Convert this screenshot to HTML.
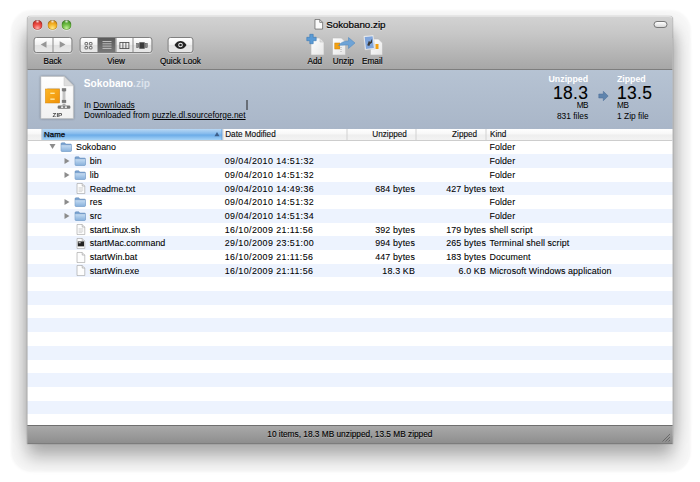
<!DOCTYPE html>
<html>
<head>
<meta charset="utf-8">
<title>Sokobano.zip</title>
<style>
html,body{margin:0;padding:0;background:#fff;}
body{width:700px;height:482px;overflow:hidden;position:relative;font-family:"Liberation Sans",sans-serif;color:#000;}
.abs{position:absolute;}
#win{position:absolute;left:27px;top:16px;width:644.8px;height:428.2px;transform:translateX(.5px);border-radius:4px 4px 0 0;
  box-shadow:0 13px 17px rgba(0,0,0,0.29),0 0 1px rgba(0,0,0,0.5);background:#fff;}
#tb{position:absolute;left:0;top:0;width:100%;height:52.7px;border-radius:4px 4px 0 0;
  background:linear-gradient(#d3d3d3 0,#c7c7c7 33%,#a7a7a7 100%);border-bottom:1px solid #7e7e7e;box-shadow:inset 0 1px 0 #e2e2e2;}
.tl{position:absolute;top:3px;width:10px;height:10px;border-radius:50%;box-shadow:inset 0 0 0 .6px rgba(0,0,0,.3),0 1px 0 rgba(255,255,255,.4);}
.lbl{position:absolute;top:40.3px;font-size:8.2px;line-height:10px;white-space:nowrap;color:#000;-webkit-text-stroke:.15px #000;text-shadow:0 1px 0 rgba(255,255,255,.35);transform:translateX(-50%);}
.btn{position:absolute;top:20.3px;height:16px;border:1px solid #808080;border-radius:3px;
  background:linear-gradient(#ffffff,#f0f0f0 48%,#e2e2e2 52%,#e8e8e8);box-shadow:0 1px 0 rgba(255,255,255,.4);box-sizing:border-box;}
#info{position:absolute;left:0;top:53.7px;width:100%;height:59.7px;background:linear-gradient(#b6c3d3,#a9b6c8);}
#hdr{position:absolute;left:0;top:113px;width:100%;height:12px;background:linear-gradient(#ffffff,#f7f7f7 48%,#eeeeee 52%,#f3f3f3);border-bottom:1px solid #cdcdcd;box-sizing:border-box;z-index:2;}
.hc{position:absolute;top:0;height:11px;font-size:8.2px;line-height:11.6px;-webkit-text-stroke:.12px #000;white-space:nowrap;color:#111;}
.hd{position:absolute;top:0;width:1px;height:11px;background:#d2d2d2;}
#rows{position:absolute;left:0;top:124px;width:100%;height:285px;overflow:hidden;
  background:repeating-linear-gradient(#fff .65px,#fff 14.33px,#edf3fe 14.33px,#edf3fe 28.01px);}
.r{position:absolute;left:0;width:100%;height:13.68px;font-size:8.9px;line-height:14.2px;white-space:nowrap;-webkit-text-stroke:.08px #000;}
.r span{position:absolute;top:0;}
.d{left:197.2px;letter-spacing:.42px;}
.u{right:257.3px;text-align:right;letter-spacing:.15px;}
.z{right:186.3px;text-align:right;letter-spacing:.15px;}
.k{left:462px;letter-spacing:.09px;}
#sb{position:absolute;left:0;top:409px;width:100%;height:19.2px;background:linear-gradient(#a9a9a9,#8e8e8e);border-top:1px solid #6f6f6f;border-bottom:1px solid #7c7c7c;box-sizing:border-box;
  font-size:8.3px;line-height:17.4px;text-align:center;color:#000;-webkit-text-stroke:.12px #000;text-shadow:0 1px 0 rgba(255,255,255,.3);}
svg{position:absolute;overflow:visible;}
.halo{position:absolute;left:0;top:0;width:100%;height:100%;border-radius:7px;box-shadow:.7px 11px 2px 17px rgba(0,0,0,.03);z-index:-1;}
.sh{position:absolute;left:0;top:22px;width:100%;height:398px;box-shadow:0 0 18px rgba(0,0,0,.22);z-index:-1;}
</style>
</head>
<body>
<div id="win">
  <svg width="0" height="0" style="left:0;top:0"><defs><linearGradient id="fg" x1="0" y1="0" x2="0" y2="1"><stop offset="0" stop-color="#c2daf2"/><stop offset="1" stop-color="#8ab2dc"/></linearGradient></defs></svg>
  <div class="sh"></div>
  <div class="halo"></div>
  <div id="tb"><div class="abs" style="left:0;top:1px;width:100%;height:0">
    <div class="tl" style="left:5.4px;background:radial-gradient(circle at 50% 12%,rgba(255,255,255,.85) 0,rgba(255,255,255,0) 22%),radial-gradient(circle at 50% 82%,#ffb0aa 0,#ee5048 38%,#d93a32 62%,#8e261f 100%);"></div>
    <div class="tl" style="left:19.8px;background:radial-gradient(circle at 50% 12%,rgba(255,255,255,.85) 0,rgba(255,255,255,0) 22%),radial-gradient(circle at 50% 82%,#ffe88a 0,#f6b92c 38%,#e89c18 62%,#94600c 100%);"></div>
    <div class="tl" style="left:34.1px;background:radial-gradient(circle at 50% 12%,rgba(255,255,255,.85) 0,rgba(255,255,255,0) 22%),radial-gradient(circle at 50% 82%,#c4f09a 0,#74c048 38%,#56a632 62%,#2f701a 100%);"></div>
    <!-- title -->
    <svg style="left:286.6px;top:2px" width="8.6" height="10.6" viewBox="0 0 9 11"><path d="M.5.5h5l3 3v7h-8z" fill="#fafafa" stroke="#666" stroke-width=".8"/><path d="M5.5.5v3h3" fill="none" stroke="#666" stroke-width=".8"/></svg>
    <div class="abs" style="left:298.7px;top:1.6px;font-size:9.8px;line-height:12px;white-space:nowrap;color:#000;-webkit-text-stroke:.2px #000;text-shadow:0 1px 0 rgba(255,255,255,.4);">Sokobano.zip</div>
    <!-- pill -->
    <div class="abs" style="left:626px;top:4px;width:14px;height:6.5px;border:1px solid #777;border-radius:4px;background:linear-gradient(#fff,#d8d8d8);box-sizing:border-box"></div>
    <!-- back/forward -->
    <div class="btn" style="left:6px;width:38.6px;"></div>
    <div class="abs" style="left:25px;top:21.3px;width:1px;height:14px;background:#8a8a8a"></div>
    <svg style="left:13.3px;top:24.4px" width="6.2" height="7" viewBox="0 0 6 7" preserveAspectRatio="none"><path d="M5.8 0.2v6.6L0.2 3.5z" fill="#969696"/></svg>
    <svg style="left:32px;top:24.4px" width="6.2" height="7" viewBox="0 0 6 7" preserveAspectRatio="none"><path d="M0.2 0.2v6.6L5.8 3.5z" fill="#969696"/></svg>
    <div class="lbl" style="left:25.1px">Back</div>
    <!-- view segmented -->
    <div class="btn" style="left:51.6px;width:73px;"></div>
    <div class="abs" style="left:70.2px;top:21.3px;width:17.5px;height:14px;background:linear-gradient(#5a5a5a,#787878);"></div>
    <div class="abs" style="left:87.7px;top:21.3px;width:1px;height:14px;background:#8a8a8a"></div>
    <div class="abs" style="left:105.2px;top:21.3px;width:1px;height:14px;background:#8a8a8a"></div>
    <svg style="left:57.2px;top:24.6px" width="8" height="7.4" viewBox="0 0 8 7.4"><g fill="#f4f4f4" stroke="#4a4a4a" stroke-width=".8"><rect x=".5" y=".5" width="2.6" height="2.4" rx=".4"/><rect x="4.9" y=".5" width="2.6" height="2.4" rx=".4"/><rect x=".5" y="4.5" width="2.6" height="2.4" rx=".4"/><rect x="4.9" y="4.5" width="2.6" height="2.4" rx=".4"/></g></svg>
    <svg style="left:74.6px;top:24px" width="9" height="8" viewBox="0 0 9 8"><g stroke="#c8c8c8" stroke-width=".9"><path d="M0 .5h9M0 2.8h9M0 5.1h9M0 7.4h9"/></g></svg>
    <svg style="left:92px;top:24.5px" width="10" height="7" viewBox="0 0 10 7"><g fill="none" stroke="#444" stroke-width=".8"><rect x=".4" y=".4" width="9" height="6.2"/><path d="M3.4.4v6.2M6.4.4v6.2"/></g></svg>
    <svg style="left:109.2px;top:24.6px" width="11" height="7" viewBox="0 0 11 7"><rect x="2.800" y=".3" width="5.400" height="6.400" fill="#3a3a3a"/><rect x=".2" y="1.300" width="2" height="4.400" fill="#8a8a8a" stroke="#555" stroke-width=".5"/><rect x="8.800" y="1.300" width="2" height="4.400" fill="#8a8a8a" stroke="#555" stroke-width=".5"/></svg>
    <div class="lbl" style="left:88.6px">View</div>
    <!-- quick look -->
    <div class="btn" style="left:140.4px;width:25.5px;"></div>
    <svg style="left:147.2px;top:24.2px" width="12" height="8" viewBox="0 0 12 8"><path d="M0 4C2 .8 4 0 6 0s4 .8 6 4c-2 3.200-4 4-6 4S2 7.200 0 4z" fill="#222"/><circle cx="6" cy="4" r="2.300" fill="#f2f2f2"/><circle cx="6" cy="4" r="1.300" fill="#222"/></svg>
    <div class="lbl" style="left:152.9px">Quick Look</div>
    <!-- Add -->
    <svg style="left:278.5px;top:16px" width="20" height="23" viewBox="0 0 20 23"><defs><linearGradient id="pp" x1="0" y1="0" x2="1" y2="1"><stop offset="0" stop-color="#ffffff"/><stop offset="1" stop-color="#e6e6e6"/></linearGradient></defs><path d="M4.500 5h9l4 4v13h-13z" fill="url(#pp)" stroke="#b8b8b8" stroke-width=".6"/><path d="M13.500 5v4h4z" fill="#e2e2e2" stroke="#b8b8b8" stroke-width=".5"/><path d="M3.300 1.300h3.400v3h3v3.400h-3v3H3.300v-3h-3V4.300h3z" fill="#5b9bd5" stroke="#3b78b4" stroke-width=".6"/></svg>
    <div class="lbl" style="left:287.4px">Add</div>
    <!-- Unzip -->
    <svg style="left:304px;top:17px" width="24" height="22" viewBox="0 0 24 22"><path d="M1 4h9l4 4v13H1z" fill="url(#pp)" stroke="#b8b8b8" stroke-width=".6"/><rect x="3.300" y="9" width="5" height="6" fill="#f2a012" stroke="#c97d06" stroke-width=".5"/><path d="M9.500 13v5" stroke="#aaa" stroke-width="1" stroke-dasharray="1 1"/><path d="M7 11.500c3-3.500 6-4.500 10-4.500V3.500l6.500 5.500-6.500 5.500V11c-4 0-7 .2-10 .5z" fill="#6ea3d6" stroke="#4a84bd" stroke-width=".5"/></svg>
    <div class="lbl" style="left:315.8px">Unzip</div>
    <!-- Email -->
    <svg style="left:336px;top:17px" width="22" height="22" viewBox="0 0 22 22"><path d="M7 5h8l4 4v12H7z" fill="url(#pp)" stroke="#b8b8b8" stroke-width=".6"/><rect x="12" y="10" width="3" height="5" fill="#f2a012"/><g transform="rotate(-6 6 9)"><rect x=".8" y="1.500" width="10" height="14" fill="#f4f4f4" stroke="#c9c9c9" stroke-width=".5"/><rect x="1.800" y="2.500" width="8" height="12" fill="#7fa5dc"/><path d="M3.500 11l2-4 1.500 1 2-3-.5 4-2 1-1 2z" fill="#3a3a3a"/></g></svg>
    <div class="lbl" style="left:344.8px">Email</div>
  </div></div>

  <div id="info">
    <!-- zip icon -->
    <svg style="left:12.5px;top:6.1px;filter:drop-shadow(0 .6px .8px rgba(0,0,0,.35))" width="33.3" height="43" viewBox="0 0 34 44" preserveAspectRatio="none"><defs><linearGradient id="pg" x1="0" y1="0" x2="0" y2="1"><stop offset="0" stop-color="#ffffff"/><stop offset="1" stop-color="#f1f1f1"/></linearGradient><linearGradient id="og" x1="0" y1="0" x2="1" y2="1"><stop offset="0" stop-color="#fdb827"/><stop offset="1" stop-color="#ee8f06"/></linearGradient></defs>
      <path d="M.4.400H24l9.600 9.600v33.600H.4z" fill="url(#pg)" stroke="#c4c4c4" stroke-width=".6"/>
      <path d="M24 .4v9.600h9.600z" fill="#dedede" stroke="#c4c4c4" stroke-width=".5"/>
      <rect x="7.500" y="12.500" width="12" height="15" fill="#e9e9e9" stroke="#bdbdbd" stroke-width=".5"/>
      <rect x="5" y="13.300" width="14.500" height="14.300" fill="url(#og)" stroke="#d88605" stroke-width=".5"/>
      <rect x="10" y="17" width="4.500" height="1.400" fill="#ffe9a8"/><rect x="10" y="23" width="4.500" height="1.400" fill="#ffe9a8"/>
      <path d="M24 13v20" stroke="#8f8f8f" stroke-width="3" stroke-dasharray="1 1"/>
      <rect x="21.800" y="12.500" width="4.400" height="3" fill="#7a7a7a"/><rect x="21.800" y="24.500" width="4.400" height="3" fill="#7a7a7a"/>
      <rect x="17.500" y="30.200" width="13" height="3.300" rx="1.200" fill="#767676"/><rect x="21" y="30.900" width="2.200" height="1.900" rx=".6" fill="#e8e8e8"/><rect x="24.800" y="30.900" width="2.200" height="1.900" rx=".6" fill="#e8e8e8"/>
      <text x="17.300" y="41.500" font-size="6.400" font-weight="bold" text-anchor="middle" fill="#4a4a4a" font-family="Liberation Sans, sans-serif">ZIP</text>
    </svg>
    <div class="abs" style="left:56.3px;top:8.3px;font-size:10.2px;line-height:12px;font-weight:bold;color:#fff;white-space:nowrap;">Sokobano<span style="color:#dbe2ec">.zip</span></div>
    <div class="abs" style="left:56.500px;top:31.400px;font-size:8.400px;line-height:9.500px;white-space:nowrap;color:#000">In <u>Downloads</u><br>Downloaded from <u>puzzle.dl.sourceforge.net</u></div>
    <div class="abs" style="left:219px;top:30.3px;width:1px;height:10px;background:#222"></div>
    <!-- right stats -->
    <div class="abs" style="right:84.2px;top:4.5px;font-size:8.800px;line-height:10px;font-weight:bold;color:#fff;white-space:nowrap;">Unzipped</div>
    <div class="abs" style="right:84px;top:13px;font-size:17.500px;line-height:20px;white-space:nowrap;letter-spacing:.3px;-webkit-text-stroke:.1px #000">18.3</div>
    <div class="abs" style="right:84.2px;top:30.9px;font-size:8.2px;line-height:10px;white-space:nowrap;letter-spacing:-.45px">MB</div>
    <div class="abs" style="right:84.2px;top:41.6px;font-size:8.400px;line-height:10px;white-space:nowrap">831 files</div>
    <svg style="left:570.8px;top:21px" width="10" height="10" viewBox="0 0 10 10"><path d="M.3 3h4.500V.3L9.700 5 4.800 9.700V7H.3z" fill="#5f84ad" stroke="#486b94" stroke-width=".5"/></svg>
    <div class="abs" style="left:589.4px;top:4.5px;font-size:8.800px;line-height:10px;font-weight:bold;color:#fff;white-space:nowrap;">Zipped</div>
    <div class="abs" style="left:589.5px;top:13px;font-size:17.500px;line-height:20px;white-space:nowrap;letter-spacing:.3px;-webkit-text-stroke:.1px #000">13.5</div>
    <div class="abs" style="left:589.6px;top:30.9px;font-size:8.2px;line-height:10px;white-space:nowrap;letter-spacing:-.45px">MB</div>
    <div class="abs" style="left:589.6px;top:41.6px;font-size:8.400px;line-height:10px;white-space:nowrap">1 Zip file</div>
  </div>

  <div id="hdr">
    <div class="abs" style="left:14px;top:0;width:181px;height:11px;background:linear-gradient(#b9d8f4,#82b9ec 46%,#6aabe7 54%,#a6d4f8);box-shadow:inset -1px 0 0 #6a9fd8,inset 1px 0 0 #8fbcea"></div>
    <div class="hc" style="left:16.6px;font-size:7.9px;-webkit-text-stroke:.25px #000">Name</div>
    <svg style="left:187px;top:3px" width="5" height="4.3" viewBox="0 0 5 4" preserveAspectRatio="none"><path d="M2.500 0L5 4H0z" fill="#3c5f8a"/></svg>
    <div class="hd" style="left:13.500px"></div>
    <div class="hd" style="left:195px"></div>
    <div class="hc" style="left:197.700px">Date Modified</div>
    <div class="hd" style="left:318.800px"></div>
    <div class="hc" style="right:265.400px">Unzipped</div>
    <div class="hd" style="left:388.200px"></div>
    <div class="hc" style="right:195.200px">Zipped</div>
    <div class="hd" style="left:458.300px"></div>
    <div class="hc" style="left:462.500px">Kind</div>
  </div>

  <div id="rows">
    <div class="r" style="top:0.2px"><svg style="left:21.7px;top:4.300px" width="6" height="5" viewBox="0 0 6 5"><path d="M0 0h6L3 5z" fill="#8c8c8c"/></svg><svg style="left:32.9px;top:1.9px" width="11.5" height="10" viewBox="0 0 23 19" preserveAspectRatio="none"><path d="M1 3.500Q1 1.500 3 1.500h5.500l2 2.500H20q2 0 2 2V16q0 2-2 2H3q-2 0-2-2z" fill="#7ba3cf" stroke="#5f8aba" stroke-width="1"/><path d="M1.500 6.500h20V16q0 1.500-1.500 1.500H3Q1.500 17.500 1.500 16z" fill="url(#fg)"/><path d="M1.500 6.500h20" stroke="#d3e4f4" stroke-width="1"/></svg><span style="left:48.5px">Sokobano</span><span class="k">Folder</span></div>
    <div class="r" style="top:14.33px"><svg style="left:37.2px;top:3.800px" width="5" height="6" viewBox="0 0 5 6"><path d="M0 0L5 3 0 6z" fill="#8c8c8c"/></svg><svg style="left:47.2px;top:1.9px" width="11.5" height="10" viewBox="0 0 23 19" preserveAspectRatio="none"><path d="M1 3.500Q1 1.500 3 1.500h5.500l2 2.500H20q2 0 2 2V16q0 2-2 2H3q-2 0-2-2z" fill="#7ba3cf" stroke="#5f8aba" stroke-width="1"/><path d="M1.500 6.500h20V16q0 1.500-1.500 1.500H3Q1.500 17.500 1.500 16z" fill="url(#fg)"/><path d="M1.500 6.500h20" stroke="#d3e4f4" stroke-width="1"/></svg><span style="left:62.3px">bin</span><span class="d">09/04/2010 14:51:32</span><span class="k">Folder</span></div>
    <div class="r" style="top:28.01px"><svg style="left:37.2px;top:3.800px" width="5" height="6" viewBox="0 0 5 6"><path d="M0 0L5 3 0 6z" fill="#8c8c8c"/></svg><svg style="left:47.2px;top:1.9px" width="11.5" height="10" viewBox="0 0 23 19" preserveAspectRatio="none"><path d="M1 3.500Q1 1.500 3 1.500h5.500l2 2.500H20q2 0 2 2V16q0 2-2 2H3q-2 0-2-2z" fill="#7ba3cf" stroke="#5f8aba" stroke-width="1"/><path d="M1.500 6.500h20V16q0 1.500-1.500 1.500H3Q1.500 17.500 1.500 16z" fill="url(#fg)"/><path d="M1.500 6.500h20" stroke="#d3e4f4" stroke-width="1"/></svg><span style="left:62.3px">lib</span><span class="d">09/04/2010 14:51:32</span><span class="k">Folder</span></div>
    <div class="r" style="top:41.69px"><svg style="left:48.6px;top:1.500px" width="8.800" height="11" viewBox="0 0 17 21"><path d="M1 .8h10l5 5V20.200H1z" fill="#fdfdfd" stroke="#909090" stroke-width="1"/><path d="M11 .8v5h5" fill="#ececec" stroke="#909090" stroke-width="1"/><g stroke="#bdbdbd" stroke-width="1"><path d="M4 9h9M4 11.500h9M4 14h9M4 16.500h7"/></g></svg><span style="left:62.3px">Readme.txt</span><span class="d">09/04/2010 14:49:36</span><span class="u">684 bytes</span><span class="z">427 bytes</span><span class="k">text</span></div>
    <div class="r" style="top:55.37px"><svg style="left:37.2px;top:3.800px" width="5" height="6" viewBox="0 0 5 6"><path d="M0 0L5 3 0 6z" fill="#8c8c8c"/></svg><svg style="left:47.2px;top:1.9px" width="11.5" height="10" viewBox="0 0 23 19" preserveAspectRatio="none"><path d="M1 3.500Q1 1.500 3 1.500h5.500l2 2.500H20q2 0 2 2V16q0 2-2 2H3q-2 0-2-2z" fill="#7ba3cf" stroke="#5f8aba" stroke-width="1"/><path d="M1.500 6.500h20V16q0 1.500-1.500 1.500H3Q1.500 17.500 1.500 16z" fill="url(#fg)"/><path d="M1.500 6.500h20" stroke="#d3e4f4" stroke-width="1"/></svg><span style="left:62.3px">res</span><span class="d">09/04/2010 14:51:32</span><span class="k">Folder</span></div>
    <div class="r" style="top:69.05px"><svg style="left:37.2px;top:3.800px" width="5" height="6" viewBox="0 0 5 6"><path d="M0 0L5 3 0 6z" fill="#8c8c8c"/></svg><svg style="left:47.2px;top:1.9px" width="11.5" height="10" viewBox="0 0 23 19" preserveAspectRatio="none"><path d="M1 3.500Q1 1.500 3 1.500h5.500l2 2.500H20q2 0 2 2V16q0 2-2 2H3q-2 0-2-2z" fill="#7ba3cf" stroke="#5f8aba" stroke-width="1"/><path d="M1.500 6.500h20V16q0 1.500-1.500 1.500H3Q1.500 17.500 1.500 16z" fill="url(#fg)"/><path d="M1.500 6.500h20" stroke="#d3e4f4" stroke-width="1"/></svg><span style="left:62.3px">src</span><span class="d">09/04/2010 14:51:34</span><span class="k">Folder</span></div>
    <div class="r" style="top:82.73px"><svg style="left:48.6px;top:1.500px" width="8.800" height="11" viewBox="0 0 17 21"><path d="M1 .8h10l5 5V20.200H1z" fill="#fdfdfd" stroke="#909090" stroke-width="1"/><path d="M11 .8v5h5" fill="#ececec" stroke="#909090" stroke-width="1"/><g stroke="#bdbdbd" stroke-width="1"><path d="M4 9h9M4 11.500h9M4 14h9M4 16.500h7"/></g></svg><span style="left:62.3px">startLinux.sh</span><span class="d">16/10/2009 21:11:56</span><span class="u">392 bytes</span><span class="z">179 bytes</span><span class="k">shell script</span></div>
    <div class="r" style="top:96.41px"><svg style="left:48.6px;top:1.500px" width="8.800" height="11" viewBox="0 0 17 21"><path d="M1 .8h10l5 5V20.200H1z" fill="#fdfdfd" stroke="#909090" stroke-width="1"/><path d="M11 .8v5h5" fill="#ececec" stroke="#909090" stroke-width="1"/><rect x="2.500" y="6.500" width="12" height="9.500" fill="#222"/><rect x="4" y="8" width="4" height="2" fill="#ddd"/></svg><span style="left:62.3px">startMac.command</span><span class="d">29/10/2009 23:51:00</span><span class="u">994 bytes</span><span class="z">265 bytes</span><span class="k">Terminal shell script</span></div>
    <div class="r" style="top:110.09px"><svg style="left:48.6px;top:1.500px" width="8.800" height="11" viewBox="0 0 17 21"><path d="M1 .8h10l5 5V20.200H1z" fill="#fdfdfd" stroke="#909090" stroke-width="1"/><path d="M11 .8v5h5" fill="#ececec" stroke="#909090" stroke-width="1"/></svg><span style="left:62.3px">startWin.bat</span><span class="d">16/10/2009 21:11:56</span><span class="u">447 bytes</span><span class="z">183 bytes</span><span class="k">Document</span></div>
    <div class="r" style="top:123.77px"><svg style="left:48.6px;top:1.500px" width="8.800" height="11" viewBox="0 0 17 21"><path d="M1 .8h10l5 5V20.200H1z" fill="#fdfdfd" stroke="#909090" stroke-width="1"/><path d="M11 .8v5h5" fill="#ececec" stroke="#909090" stroke-width="1"/></svg><span style="left:62.3px">startWin.exe</span><span class="d">16/10/2009 21:11:56</span><span class="u">18.3 KB</span><span class="z">6.0 KB</span><span class="k">Microsoft Windows application</span></div>
  </div>
  <div id="sb">10 items, 18.3 MB unzipped, 13.5 MB zipped
    <svg style="right:1.500px;bottom:1.500px;left:auto" width="9" height="9" viewBox="0 0 9 9"><path d="M8.500 1L1 8.500M8.500 4L4 8.500M8.500 7L7 8.500" stroke="#5e5e5e" stroke-width=".8"/></svg>
  </div>
</div>
</body>
</html>
